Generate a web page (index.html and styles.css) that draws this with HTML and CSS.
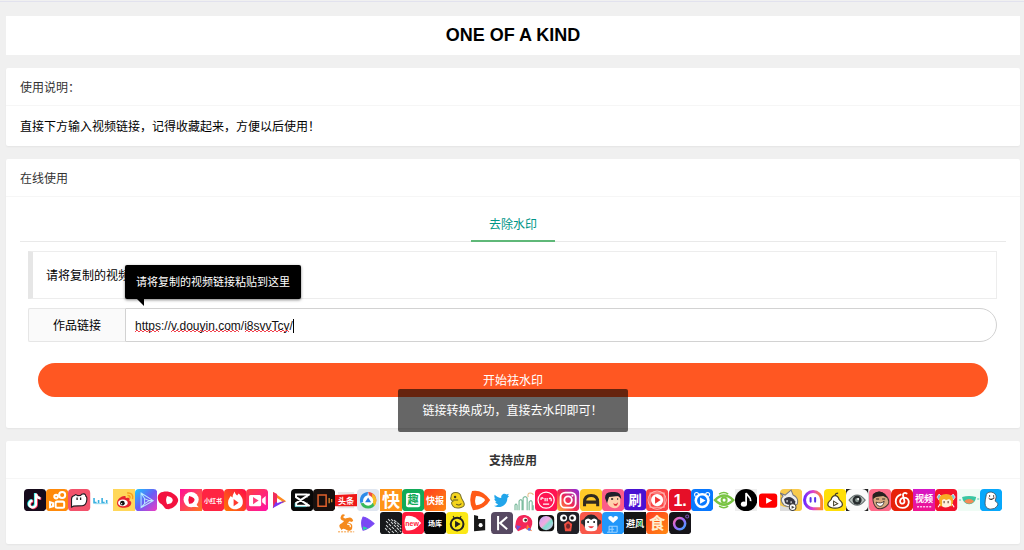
FILE: index.html
```html
<!DOCTYPE html>
<html lang="zh-CN">
<head>
<meta charset="utf-8">
<meta name="viewport" content="width=device-width, initial-scale=1">
<title>ONE OF A KIND</title>
<link rel="stylesheet" href="styles.css">
</head>
<body>
<svg class="defs" aria-hidden="true">
  <defs>
    <linearGradient id="g-prism" x1="0" y1="0" x2="1" y2="1"><stop offset="0" stop-color="#17c8ff"/><stop offset=".5" stop-color="#6b5cf5"/><stop offset="1" stop-color="#f43bc0"/></linearGradient>
    <linearGradient id="g-pink" x1="0" y1="0" x2="1" y2="1"><stop offset="0" stop-color="#ff0a9a"/><stop offset="1" stop-color="#ff7a1a"/></linearGradient>
    <linearGradient id="g-fire" x1="0" y1="1" x2="1" y2="0"><stop offset="0" stop-color="#ff7a00"/><stop offset="1" stop-color="#ff0a4a"/></linearGradient>
    <linearGradient id="g-cam" x1="0" y1="0" x2="1" y2="1"><stop offset="0" stop-color="#ff4040"/><stop offset="1" stop-color="#ff12a8"/></linearGradient>
    <linearGradient id="g-orange" x1="0" y1="0" x2="1" y2="1"><stop offset="0" stop-color="#ff3c1e"/><stop offset="1" stop-color="#ff8a12"/></linearGradient>
    <linearGradient id="g-insta" x1="0" y1="1" x2="1" y2="0"><stop offset="0" stop-color="#ffc13a"/><stop offset=".45" stop-color="#f42a4e"/><stop offset="1" stop-color="#8a2be0"/></linearGradient>
    <linearGradient id="g-ghost" x1="0" y1="0" x2="1" y2="0"><stop offset="0" stop-color="#6f2bff"/><stop offset=".5" stop-color="#e044c8"/><stop offset="1" stop-color="#ff8a28"/></linearGradient>
    <linearGradient id="g-moon" x1="0" y1="0" x2="1" y2="1"><stop offset="0" stop-color="#b9a6f8"/><stop offset=".45" stop-color="#f5a9df"/><stop offset=".6" stop-color="#7fe0cf"/><stop offset="1" stop-color="#e6b8f2"/></linearGradient>
    <linearGradient id="g-ring" x1="0" y1="0" x2="1" y2="1"><stop offset="0" stop-color="#ff6aa8"/><stop offset=".5" stop-color="#a06bff"/><stop offset="1" stop-color="#37a8ff"/></linearGradient>
    <linearGradient id="g-magenta" x1="0" y1="0" x2="0" y2="1"><stop offset="0" stop-color="#d416c8"/><stop offset="1" stop-color="#f0148c"/></linearGradient>
  </defs>
</svg>
<div class="topline"></div>
<main class="page">
  <h1 class="title">ONE OF A KIND</h1>

  <section class="card">
    <h2 class="card-head">使用说明：</h2>
    <p class="card-text">直接下方输入视频链接，记得收藏起来，方便以后使用！</p>
  </section>

  <section class="card">
    <h2 class="card-head">在线使用</h2>
    <div class="panel">
      <nav class="tabs"><a class="tab" href="#remove">去除水印</a></nav>
      <form class="form" id="remove">
        <blockquote class="quote">请将复制的视频</blockquote>
        <div class="field">
          <label class="field-label" for="link">作品链接</label>
          <div class="field-box">
            <input class="field-input" id="link" type="text" spellcheck="false" value="https://v.douyin.com/i8svvTcy/">
            <svg class="marks" width="166" height="18" viewBox="0 0 166 18" aria-hidden="true">
              <path d="M0 14l2-2 2 2 2-2 2 2 2-2 2 2 2-2 2 2 2-2 2 2 2-2 2 2M36 14l2-2 2 2 2-2 2 2 2-2 2 2 2-2 2 2 2-2 2 2 2-2 2 2 2-2 2 2 2-2 2 2 2-2 2 2 2-2 2 2 2-2 2 2 2-2 2 2 2-2 2 2 2-2 2 2 2-2 2 2 2-2 2 2 2-2 2 2M110 14l2-2 2 2 2-2 2 2 2-2 2 2 2-2 2 2 2-2 2 2 2-2 2 2 2-2 2 2 2-2 2 2 2-2 2 2 2-2 2 2 2-2 2 2" fill="none" stroke="#f0434f"/>
              <path d="M158.500 1v14" stroke="#000"/>
            </svg>
            <div class="tip" role="tooltip">请将复制的视频链接粘贴到这里</div>
          </div>
        </div>
        <div class="action">
          <button class="submit" type="button">开始祛水印</button>
          <div class="toast" role="status">链接转换成功，直接去水印即可！</div>
        </div>
      </form>
    </div>
  </section>

  <section class="card">
    <h2 class="card-head card-head-center">支持应用</h2>
    <div class="apps">
      <svg viewBox="0 0 22 22"><rect width="22" height="22" rx="4" fill="#160b1c"/><g fill="none" stroke-width="2.400"><path d="M11 4v10.500a3.300 3.300 0 1 1-3.300-3.300M11 4.500c.5 2.600 2 4 4.500 4.200" stroke="#25f4ee"/><path d="M12.600 5v10.500a3.300 3.300 0 1 1-3.300-3.300M12.600 5.500c.5 2.600 2 4 4.500 4.200" stroke="#fe2c55"/><path d="M11.800 4.500V15a3.300 3.300 0 1 1-3.300-3.300M11.800 5c.5 2.600 2 4 4.500 4.200" stroke="#fff"/></g></svg>
      <svg viewBox="0 0 22 22"><rect width="22" height="22" rx="4" fill="#ff8a0a"/><g fill="none" stroke="#fff" stroke-width="2"><circle cx="10" cy="7.500" r="1.800"/><circle cx="16" cy="6" r="3"/><rect x="9.500" y="12.500" width="8.500" height="6" rx="1.500"/><path d="M7 14l-3-1v5l3-1z"/></g></svg>
      <svg viewBox="0 0 22 22"><rect width="22" height="22" rx="4" fill="#f3526b"/><path d="M3.500 14V10c0-2 1-3.200 3-3.500Q7 5 8.500 6l1 .5 3-.2C14 4 18 4.500 17.500 7c2 1 1.500 9-3 9.500l-9 .5-2 1z" fill="#fff" stroke="#241b22" stroke-width="1.100"/><path d="M9 8.500v2.500m3.500-2.500v2.500" stroke="#241b22" stroke-width="1.300" fill="none"/></svg>
      <svg viewBox="0 0 22 22"><g fill="none" stroke="#3ab0e0" stroke-width="1.600"><path d="M3 9v4.500h2.500M7.500 11v3M11 9v4.500h2.500M15.500 11v3"/></g><path d="M4 14.500h13" stroke="#94d8ef" stroke-width="1"/></svg>
      <svg viewBox="0 0 22 22"><rect width="22" height="22" fill="#ffd75a"/><path d="M4 14c0-5 6-8 8-7 1 .5.500 2 .5 2s4-1.500 4 1c0 1-.7 1.500-.7 1.500 2 .5 2.500 1.800 2.200 3-.7 3-4 4-7.500 4S4 17 4 14z" fill="#e6252e"/><ellipse cx="9.800" cy="13.800" rx="4.800" ry="3.300" fill="#fff"/><circle cx="9.300" cy="14" r="2.300" fill="#111"/><circle cx="8.500" cy="14.500" r=".7" fill="#fff"/><path d="M14 4c4-.7 6.500 2 5.300 6M14.300 6.500c1.800-.2 3 .8 2.500 2.700" fill="none" stroke="#f6a020" stroke-width="1.500"/></svg>
      <svg viewBox="0 0 22 22"><rect width="22" height="22" rx="4" fill="url(#g-prism)"/><path d="M6 4l12 7.500L6 18.500zM6 4l3.500 5.500v5L6 18.500M9.500 9.500l4.500 2-4.500 3M14 11.500h4" fill="none" stroke="#b9eaff" stroke-width="1"/></svg>
      <svg viewBox="0 0 22 22"><path d="M3 4c3-2 9-2 12 0 4 2 6 5 6 7 0 4-5 9-10 9-4 0-4-4-8-6-3-3-3-8 0-10z" fill="#f3113f"/><path d="M10 7q6 1 5.500 4.500T10 15q-2-4 0-8z" fill="#fff"/></svg>
      <svg viewBox="0 0 22 22"><rect width="22" height="22" fill="url(#g-pink)"/><circle cx="11" cy="10.500" r="7.500" fill="#fff"/><path d="M15 14l3.500 4-6-.5z" fill="#fff"/><path d="M9 7q7 2 5 5-2 3-5 2.500-1.500-3.500 0-7.500z" fill="#f3113f"/></svg>
      <svg viewBox="0 0 22 22"><rect width="22" height="22" rx="4" fill="#ff2442"/><text class="glyph" x="11" y="13.500" font-size="6" fill="#fff">小红书</text></svg>
      <svg viewBox="0 0 22 22"><rect width="22" height="22" rx="4" fill="url(#g-fire)"/><path d="M10.500 2.500C11 5 12 5.500 13 6.500l1.500-2c4 3.500 4.500 7 4 10-.7 3-3.500 5.500-7.500 5.500s-7-3-7-6.500c0-3 1.500-4.500 2.500-6.500l2 1.500c0-3 1-4 2-6z" fill="#fff"/><path d="M9.500 10l5 3.500-5 3.500z" fill="#ff3a2c"/></svg>
      <svg viewBox="0 0 22 22"><rect width="22" height="22" rx="4" fill="url(#g-cam)"/><rect x="3" y="6" width="12" height="11" rx="1.500" fill="#fff"/><path d="M16 10l3.500-3v9L16 13z" fill="#fff"/><path d="M7 8l5.500 3.500L7 15z" fill="#ff3c7c"/></svg>
      <svg viewBox="0 0 22 22"><path d="M5 3l13 9-4 2-5-4-4 5z" fill="#ff8a1e"/><path d="M5 3l4 2v9l-4 5z" fill="#f02b5c"/><path d="M4.500 19l3-6 9.500-1z" fill="#7b35f0"/><path d="M9 9l5 3-5 2z" fill="#fff"/></svg>
      <svg viewBox="0 0 22 22"><rect width="22" height="22" rx="4" fill="#080808"/><path d="M18.500 5L5 14v2.500h10.500V13.500M18.500 17L5 8V5.500h10.500v3" fill="none" stroke="#fff" stroke-width="2"/><path d="M4 14v3.500h11" fill="none" stroke="#2bd8df" stroke-width=".6"/></svg>
      <svg viewBox="0 0 22 22"><rect width="22" height="22" rx="4" fill="#18110f"/><path d="M13 6H5v11h8z" fill="none" stroke="#e0602c" stroke-width="1.500"/><path d="M16 9v5m2.500-4v3" stroke="#d88b30" stroke-width="1.300"/></svg>
      <svg viewBox="0 0 22 22"><path d="M3 4h16M3 18h16" stroke="#e8e8e8" stroke-width="2"/><path d="M0 6l22-1v12H0z" fill="#ee1717"/><text class="glyph" x="11" y="14.500" font-size="8" fill="#fff">头条</text></svg>
      <svg viewBox="0 0 22 22"><rect width="22" height="22" rx="4" fill="#dfe6f0"/><path d="M11 3a8 8 0 0 0-7.500 11L9 11z" fill="#2d8be8"/><path d="M11 3a8 8 0 0 1 7.500 11L13 9z" fill="#f04c3c"/><path d="M3.500 14a8 8 0 0 0 15 0l-7-.5z" fill="#37b95a"/><path d="M15 4.500A8 8 0 0 1 17 17l-2-6z" fill="#f6bd2a"/><circle cx="11" cy="11.500" r="5" fill="#fff"/><path d="M11 8.500l3 4.500H8z" fill="#287be6"/></svg>
      <svg viewBox="0 0 22 22"><rect width="22" height="22" fill="#ff9418"/><text class="glyph" x="11" y="17.500" font-size="18" fill="#fff">快</text></svg>
      <svg viewBox="0 0 22 22"><rect width="22" height="22" rx="4" fill="#12aa59"/><rect x="4" y="4" width="14" height="14" rx="2" fill="#fff"/><text class="glyph" x="11" y="15" font-size="11" fill="#12aa59">趣</text></svg>
      <svg viewBox="0 0 22 22"><rect width="22" height="22" rx="4" fill="url(#g-orange)"/><text class="glyph" x="11" y="14.500" font-size="9" fill="#fff">快报</text></svg>
      <svg viewBox="0 0 22 22"><path d="M5 8c0-6 9-6 10 0 0 2 4 5 3 8s-9 4-11 1-2-4 0-5c-2-1-3-2-2-4z" fill="#f5d51c" stroke="#78712a"/><circle cx="9" cy="8" r="1.200" fill="#413c1e"/><path d="M7 11h5M10 15c3 2 5 0 5-1" fill="none" stroke="#5f5820"/></svg>
      <svg viewBox="0 0 22 22"><path d="M3 2q10-2 18 9-5 9-17 10-5-9-1-19z" fill="#ff5a16"/><path d="M7 7q6 0 9 4-3 5-9 5-2-4 0-9z" fill="#fff"/></svg>
      <svg viewBox="0 0 22 22"><path d="M18 7l-1.800 1.800c0 6-4.500 9-8.500 9-2 0-3.700-.5-4.700-1.300 2 0 3-.5 4-1.500-1.700-.3-2.500-1.300-2.700-2.200h1.200C4 12 3.300 10.800 3.300 9.500l1.200.4C3.200 8.800 3 7 3.700 5.700c1.700 2 4 3 6.500 3.200C9.500 5 13.500 3.500 15.500 5.500l2.200-.8-1.200 2z" fill="#22a5ea"/></svg>
      <svg viewBox="0 0 22 22"><g fill="none" stroke="#7fbda0" stroke-width="1.200"><path d="M2 21v-5q1-2 2 0v5m2 0v-9q2-3 3 0v9m1 0V9q2-3 4 0v12m2 0v-8q2-3 3 0v8m1 0v-5"/></g><path d="M15 8q-1-4 2-4t3 2" fill="none" stroke="#e5bc84"/></svg>
      <svg viewBox="0 0 22 22"><rect width="22" height="22" rx="4" fill="#ff1552"/><circle cx="11" cy="11" r="8" fill="none" stroke="#fff" stroke-width="1.200"/><path d="M6 11v-2q2-1 2 1m2-1v3m2-3v3m2-2q1-2 2 0v2m-8 3h6" fill="none" stroke="#fff" stroke-width="1.200"/></svg>
      <svg viewBox="0 0 22 22"><rect width="22" height="22" rx="4" fill="url(#g-insta)"/><rect x="3.500" y="3.500" width="15" height="15" rx="4.500" fill="none" stroke="#fff" stroke-width="1.800"/><circle cx="11" cy="11" r="3.700" fill="none" stroke="#fff" stroke-width="1.800"/><circle cx="15.300" cy="6.700" r="1" fill="#fff"/></svg>
      <svg viewBox="0 0 22 22"><rect width="22" height="22" rx="4" fill="#ffc928"/><path d="M4.500 17v-4q0-6.500 6.500-6.500t6.500 6.500v4M4 13h14" fill="none" stroke="#302a20" stroke-width="3"/></svg>
      <svg viewBox="0 0 22 22"><rect width="22" height="22" rx="4" fill="#fb5b88"/><path d="M5 8q4-3 13 0v7q-3 6-9 3-5-2-4-10z" fill="#ffd2ad"/><path d="M3 9Q3 2 11 3q8-1 8 7l-3-3-9 1-2 6z" fill="#20202b"/><path d="M9 10h2m4 0h1" stroke="#222" stroke-width="1.500"/><path d="M11 14q3 2 5-1-1 5-4 3z" fill="#e12f38"/></svg>
      <svg viewBox="0 0 22 22"><rect width="22" height="22" fill="#f4f1ff"/><rect width="22" height="21" rx="4" fill="#4812d2"/><text class="glyph" x="11" y="16" font-size="13" fill="#fff">刷</text></svg>
      <svg viewBox="0 0 22 22"><rect width="22" height="22" rx="4" fill="#fb4545"/><circle cx="11" cy="11" r="9" fill="none" stroke="#ffb1ad"/><path d="M4 4h14v14H4z" fill="none" stroke="#ffb1ad"/><circle cx="11" cy="11" r="6" fill="#fff"/><path d="M9 7.500l5.500 3.500L9 14.500z" fill="#ef3030"/></svg>
      <svg viewBox="0 0 22 22"><rect width="22" height="22" rx="4" fill="#e60f28"/><text class="num" x="11" y="17" font-size="16" fill="#fff">1.</text></svg>
      <svg viewBox="0 0 22 22"><rect width="22" height="22" rx="4" fill="#0878ff"/><circle cx="5.500" cy="5.500" r="2" fill="none" stroke="#fff"/><circle cx="16.500" cy="5.500" r="2" fill="none" stroke="#fff"/><circle cx="11" cy="11.500" r="7.500" fill="#fff"/><circle cx="11" cy="11.500" r="5" fill="#0878ff"/><path d="M9 8.500l5.500 3-5.500 3z" fill="#fff"/></svg>
      <svg viewBox="0 0 22 22"><path d="M2 11q9-9 18 0-9 9-18 0z" fill="none" stroke="#79c443" stroke-width="2.400"/><circle cx="11" cy="11" r="2.500" fill="none" stroke="#79c443" stroke-width="2"/><path d="M6 5q5-3 9 0M6 17q5 3 9 0" fill="none" stroke="#79c443" stroke-width="1.500"/></svg>
      <svg viewBox="0 0 22 22"><rect width="22" height="22" fill="#eee"/><circle cx="11" cy="11" r="11" fill="#000"/><ellipse cx="8.800" cy="15" rx="3" ry="2.500" fill="#fff"/><path d="M11 15V4c1 3 5 3.500 4.500 8" fill="none" stroke="#fff" stroke-width="1.800"/></svg>
      <svg viewBox="0 0 22 22"><rect x="2" y="4.500" width="18" height="14" rx="3" fill="#f00"/><path d="M9 8.500l6 3-6 3z" fill="#fff"/></svg>
      <svg viewBox="0 0 22 22"><rect width="22" height="22" rx="4" fill="#f8ca4c"/><path d="M0 4l5 2 6-5 2 5q6 3 4 9-6 5-13 1-5-5-1-9z" fill="#eee" stroke="#77777f"/><path d="M0 16q8 4 14 0v6H0z" fill="#ddd"/><path d="M4 10q6-5 11 2v3q-6 2-10-1z" fill="#343440"/><path d="M7 11v2m4-1v2" stroke="#fff"/><circle cx="12.500" cy="18" r="3.300" fill="#fff" stroke="#444"/><path d="M11.500 16.500l3 1.500-3 1.500z" fill="#444"/></svg>
      <svg viewBox="0 0 22 22"><path d="M19.500 11a8.500 8.500 0 1 0-8.500 8.500h8.500z" fill="#fff" stroke="url(#g-ghost)" stroke-width="3"/><path d="M8.500 9v3.500M13 9v3.500" stroke="#5531e8" stroke-width="2" stroke-linecap="round"/></svg>
      <svg viewBox="0 0 22 22"><rect width="22" height="22" rx="4" fill="#ffdf08"/><path d="M11 6.500q-3 0-4 4-4 3-3 6 2 2.500 7 2.500t7-2.500q1-3-3-6-1-4-4-4zM11 6.500q0-2.500 3-2.500" fill="#fff" stroke="#423d26" stroke-width="1.200"/><path d="M9.500 12l4 2.500-4 2z" fill="none" stroke="#423d26" stroke-width="1"/></svg>
      <svg viewBox="0 0 22 22"><rect width="22" height="22" fill="#222"/><rect width="22" height="22" rx="6" fill="#fafafa"/><path d="M3 11q8-10 16 0-8 10-16 0z" fill="#b9c1bd" stroke="#667070"/><circle cx="11" cy="11" r="4.500" fill="#272c2e"/><circle cx="11" cy="11" r="2" fill="#86948f"/><circle cx="12" cy="10" r="1" fill="#fff"/></svg>
      <svg viewBox="0 0 22 22"><rect width="22" height="22" rx="4" fill="#ff6c8a"/><path d="M4 6q6-6 12 0 5 4 3 9-5 6-11 4-5-4-4-13z" fill="#d7aa80" stroke="#483431"/><path d="M4 10V5q6-5 12 0l2 4-4-2-7 1z" fill="#28211f"/><path d="M7 10h3m3 0h3" stroke="#332822"/><path d="M7 13q5 2 8-1-1 6-5 5-3-1-3-4z" fill="#fff" stroke="#332822" stroke-width=".8"/></svg>
      <svg viewBox="0 0 22 22"><rect width="22" height="22" rx="5" fill="#e72109"/><path d="M15.500 4.500c-2-1.500-4 0-3.600 2l1.400 5.500c.5 3-4 3.500-4.300.5-.3-2 1.500-4 4-4 3.500 0 5 2.500 4.500 5.500-.6 3-3 4.700-6 4.700-4 0-6.800-2.700-6.800-6.400C4.700 9 6.700 6.500 9.500 5.500" fill="none" stroke="#fff" stroke-width="1.800" stroke-linecap="round"/></svg>
      <svg viewBox="0 0 22 22"><rect width="22" height="22" fill="url(#g-magenta)"/><text class="glyph" x="11" y="13" font-size="9" fill="#fff">视频</text><path d="M4 17.500h14" stroke="#ffc0eb" stroke-width="1.500" stroke-dasharray="2 1"/></svg>
      <svg viewBox="0 0 22 22"><rect width="22" height="22" rx="4" fill="#f2132b"/><path d="M2 8l2-3 2 2-2 4zM16 7l2-2 2 3-2 3z" fill="#77cbd5" stroke="#fff" stroke-width=".7"/><path d="M5 17l-1-6q0-6 7-6 7 0 7 7l-1 5z" fill="#f8ac24"/><path d="M7 11l2-1 2 1 3-1 2 2v4q-5 4-9 1z" fill="#fff2dc"/><path d="M9 12v2m4-2v2" stroke="#563b2b"/><path d="M5 15l-2 3m14-3l2 3" stroke="#fff"/></svg>
      <svg viewBox="0 0 22 22"><rect width="22" height="22" fill="#effcf5"/><path d="M4 8q7-2 14 0-1 7-7 7T4 8z" fill="#3bc6a3"/><path d="M6 12q5-4 10 0-5 5-10 0z" fill="#f58b57"/><path d="M1 11h2m16-1h2" stroke="#56c8a7"/></svg>
      <svg viewBox="0 0 22 22"><rect width="22" height="22" rx="4" fill="#08a8fb"/><path d="M6 7q0-4 5-4 5 1 5 5l-1 4q4 2 2 5-2 3-7 3-5-1-5-6 0-3 1-7z" fill="#fff" stroke="#3a4b5a" stroke-width=".8"/><path d="M9 7h1m3 0h1" stroke="#222" stroke-width="1.500"/><path d="M9 9.500q3 2 5-1" fill="none" stroke="#222"/><path d="M8 9h1m5 0h1" stroke="#ff8a7a"/></svg>

      <svg class="row-start" viewBox="0 0 22 22"><path d="M6 17q-4-4 1-6l2-2q-5-1-3-5 1-3 4-1l-2 2q1 2 4 1 5-2 6 3l-2 1q-2-2-3 1 5 0 4 5-1 4-5 2-4-3-6 0z" fill="#f58a1d"/><path d="M12 12q4 0 3 3" fill="none" stroke="#fff" stroke-width="1.200"/><path d="M3 19.500h16" stroke="#f9bd7e" stroke-width="1.500" stroke-dasharray="2 1"/></svg>
      <svg viewBox="0 0 22 22"><path d="M6 5q5 1 11 6.500Q11 17 6 18q-3-7 0-13z" fill="#7a48f4" stroke="#7a48f4" stroke-linejoin="round"/><path d="M6 14l5 2-5 2z" fill="#28d5a4"/></svg>
      <svg viewBox="0 0 22 22"><rect width="22" height="22" rx="3" fill="#17191b"/><path d="M6 9l12 12M8 7l13 13M11 7l10 10M6 13l8 8M5 16l5 5M14 8l7 6" stroke="#d5d9da" stroke-width="1" stroke-dasharray="3 1"/></svg>
      <svg viewBox="0 0 22 22"><rect width="22" height="22" rx="4" fill="#ff1b3b"/><path d="M4 4q8-2 15 7-7 9-15 7-3-7 0-14z" fill="#fff"/><text class="num" x="10" y="13.500" font-size="7" fill="#ff1b3b">new</text></svg>
      <svg viewBox="0 0 22 22"><rect width="22" height="22" rx="4" fill="#050505"/><text class="glyph" x="11" y="14" font-size="7" fill="#fff">场库</text></svg>
      <svg viewBox="0 0 22 22"><rect width="22" height="22" rx="4" fill="#fbe817"/><circle cx="11" cy="12" r="6.300" fill="none" stroke="#222" stroke-width="2"/><path d="M9.500 9.500l4 2.500-4 2.500zM7 4l1 2m7-2l-1 2" fill="#222" stroke="#222"/></svg>
      <svg viewBox="0 0 22 22"><path d="M5 3l4 1v3h7v11l-11 1z" fill="#181818"/><circle cx="11.500" cy="13" r="2" fill="#fff"/></svg>
      <svg viewBox="0 0 22 22"><rect width="22" height="22" rx="4" fill="#574962"/><path d="M7 4v14M16 5l-7 6 7 6" fill="none" stroke="#fff" stroke-width="2"/></svg>
      <svg viewBox="0 0 22 22"><path d="M3 9Q5 2 12 3q8 2 7 9l-2 6-5-2-7 3-3-4z" fill="#f32658"/><path d="M3 13l5 1-4 4z" fill="#7152d8"/><circle cx="12" cy="8" r="2.500" fill="#fff"/><circle cx="12.500" cy="8" r="1.400" fill="#332"/><path d="M14 12l5 7-6-2z" fill="#ff7b35"/><circle cx="16" cy="17" r="1.500" fill="#5375e9"/></svg>
      <svg viewBox="0 0 22 22"><rect x="3" y="3" width="16" height="16" rx="4" fill="#111"/><circle cx="11" cy="11" r="7" fill="url(#g-moon)"/></svg>
      <svg viewBox="0 0 22 22"><rect width="22" height="22" rx="4" fill="#202026"/><circle cx="6.500" cy="6" r="3.500" fill="#fff"/><circle cx="15.500" cy="6" r="3.500" fill="#fff"/><circle cx="7" cy="6" r="1.700" fill="#111"/><circle cx="15" cy="6" r="1.700" fill="#111"/><path d="M7 12l4-3 4 3-1 7H8z" fill="#f14f41"/><ellipse cx="11" cy="14" rx="2" ry="2.500" fill="#74262a"/></svg>
      <svg viewBox="0 0 22 22"><rect width="22" height="22" rx="4" fill="#f8584a"/><circle cx="3.500" cy="10" r="2.500" fill="#333"/><circle cx="18.500" cy="10" r="2.500" fill="#333"/><circle cx="11" cy="10.500" r="8" fill="#292629"/><path d="M5 8q3-3 6 0 3-3 6 0v4q2 7-6 7t-6-7z" fill="#fff"/><path d="M8 9v2m6-2v2" stroke="#222" stroke-width="1.500"/><path d="M8 14h6q-3 4-6 0z" fill="#ec4048"/></svg>
      <svg viewBox="0 0 22 22"><rect width="22" height="22" rx="4" fill="#2297fa"/><path d="M11 11L6.500 7q-1-3 2-3 2 0 2.500 2 .5-2 2.500-2 3 0 2 3z" fill="#fff"/><path d="M7 14h8v6M7 14v6m0-3h5m-2-3v6m-5 0h10" fill="none" stroke="#9ed4ff"/></svg>
      <svg viewBox="0 0 22 22"><rect width="22" height="22" fill="#151515"/><text class="glyph" x="11" y="14.500" font-size="9" fill="#fff">避风</text><path d="M15 9l2 5m1-5l-4 5" stroke="#39bc57"/></svg>
      <svg viewBox="0 0 22 22"><rect width="22" height="22" rx="4" fill="url(#g-orange)"/><text class="glyph" x="11" y="17" font-size="16" fill="#ffefd0">食</text></svg>
      <svg viewBox="0 0 22 22"><rect width="22" height="22" rx="4" fill="#161419"/><circle cx="10.500" cy="11.500" r="5.500" fill="none" stroke="url(#g-ring)" stroke-width="2.500"/><circle cx="18" cy="4.500" r="1.500" fill="none" stroke="#7a4fb0"/></svg>
    </div>
  </section>
</main>
</body>
</html>
```
FILE: styles.css
```css
* { box-sizing: border-box; }

body {
  margin: 0;
  background: #f0f0f0;
  color: #000;
  font: 12px/20px "Liberation Sans", "Noto Sans CJK SC", sans-serif;
}

h1, h2, p, blockquote { margin: 0; }

.defs {
  position: absolute;
  width: 0;
  height: 0;
}

.topline {
  height: 2px;
  border-bottom: 1px solid #e2e2ee;
}

.page {
  display: flex;
  flex-direction: column;
  gap: 13px;
  padding: 14px 4px 6px 6px;
}

.title {
  padding: 8px;
  background: #fff;
  font-size: 18px;
  line-height: 23px;
  text-align: center;
}

.card {
  background: #fff;
  border-radius: 2px;
  box-shadow: 0 1px 2px rgba(0, 0, 0, 0.05);
}

.card-head {
  padding: 10px 14px 7px;
  border-bottom: 1px solid #f6f6f6;
  color: #333;
  font-size: 12px;
  font-weight: 400;
}

.card-head-center {
  font-weight: 700;
  text-align: center;
}

.card-text { padding: 11px 14px 9px; }

.panel { padding: 9px 14px 31px; }

.tabs {
  display: flex;
  justify-content: center;
  border-bottom: 1px solid #e9e9e9;
}

.tab {
  margin-bottom: -1px;
  padding: 9px 18px 5px;
  border-bottom: 2px solid #5fb878;
  color: #009688;
  line-height: 20px;
  text-decoration: none;
}

.form { padding: 9px 9px 0 8px; }

.quote {
  padding: 14px 13px 12px;
  border: 1px solid #ededed;
  border-left: 5px solid #e6e6e6;
}

.field {
  display: flex;
  margin-top: 9px;
}

.field-label {
  width: 97px;
  padding: 7px 0 5px;
  border: 1px solid #e6e6e6;
  border-right: 0;
  border-radius: 2px 0 0 2px;
  background: #fafafa;
  text-align: center;
}

.field-box {
  position: relative;
  flex: 1;
}

.field-input {
  display: block;
  width: 100%;
  height: 34px;
  padding: 1px 9px 0;
  border: 1px solid #d2d2d2;
  border-radius: 0 17px 17px 0;
  outline: 0;
  background: #fff;
  color: #111;
  font: inherit;
}

.marks {
  position: absolute;
  top: 10px;
  left: 10px;
}

.tip {
  position: absolute;
  bottom: 43px;
  left: 0;
  padding: 6px 11px;
  border-radius: 2px;
  background: #000;
  box-shadow: 0 1px 3px rgba(0, 0, 0, 0.5);
  color: #fff;
  font-size: 11px;
  line-height: 22px;
  white-space: nowrap;
}

.tip::after {
  position: absolute;
  top: 100%;
  left: 12px;
  border-top: 7px solid #000;
  border-left: 7px solid transparent;
  content: "";
}

.action {
  position: relative;
  padding: 21px 9px 0 10px;
}

.submit {
  display: block;
  width: 100%;
  height: 34px;
  padding: 1px 0 0;
  border: 0;
  border-radius: 17px;
  background: #ff5722;
  color: #fff;
  font: inherit;
}

.toast {
  position: absolute;
  top: 47px;
  left: 50%;
  padding: 12px 25px 11px;
  border-radius: 2px;
  background: rgba(0, 0, 0, 0.6);
  color: #fff;
  white-space: nowrap;
  transform: translateX(-50%);
}

.apps {
  display: grid;
  grid-template-columns: repeat(44, 1fr);
  row-gap: 1px;
  padding: 10px 18px;
}

.apps svg {
  display: block;
  width: 100%;
}

.row-start { grid-column-start: 15; }

.glyph,
.num {
  font-family: "Noto Sans CJK SC", sans-serif;
  font-weight: 700;
  text-anchor: middle;
}

.num { font-family: "Liberation Sans", sans-serif; }
```
